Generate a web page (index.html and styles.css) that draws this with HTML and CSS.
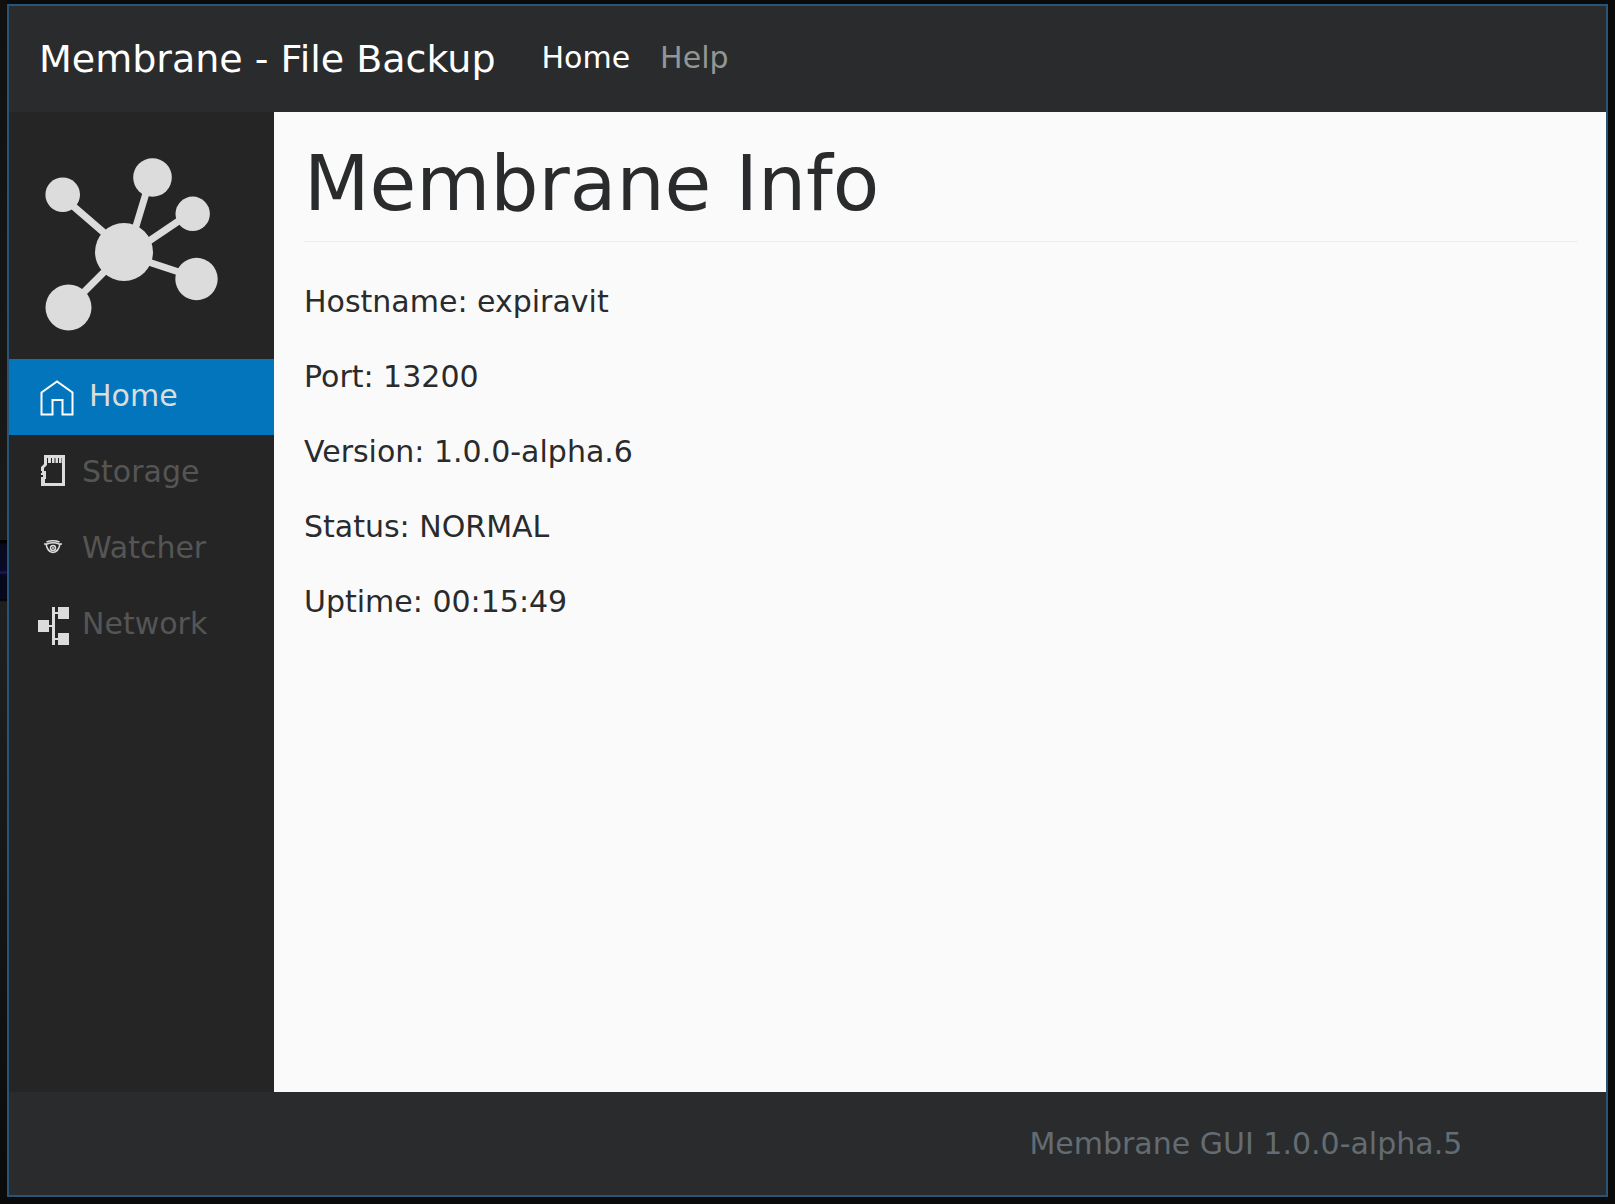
FILE: index.html
```html
<!DOCTYPE html>
<html lang="en">
<head>
<meta charset="utf-8">
<meta name="viewport" content="width=device-width, initial-scale=1">
<title>Membrane - File Backup</title>
<link rel="stylesheet" href="styles.css">
</head>
<body>
<div class="window">
  <header class="navbar">
    <a class="brand" href="#">Membrane - File Backup</a>
    <nav class="nav" aria-label="Main">
      <a class="nav-link active" href="#home">Home</a>
      <a class="nav-link" href="#help">Help</a>
    </nav>
  </header>
  <div class="body">
    <aside class="sidebar">
      <svg class="logo" viewBox="0 0 174 174" aria-hidden="true">
        <path d="M80 93 18 39.500M86 89 106 23M80 101 148 55M80 97 150 120M80 95 25 150" fill="none" stroke="currentColor" stroke-width="7"/>
        <g fill="currentColor">
          <circle cx="80" cy="95" r="29"/>
          <circle cx="18.700" cy="37.700" r="17.300"/>
          <circle cx="108.500" cy="20.500" r="19.300"/>
          <circle cx="148.700" cy="56.800" r="17.200"/>
          <circle cx="152.500" cy="122" r="21.200"/>
          <circle cx="24.500" cy="150.500" r="23"/>
        </g>
      </svg>
      <nav class="menu" aria-label="Sections">
        <a class="menu-item active" href="#home">
          <svg class="icon icon-wide" viewBox="0 0 41 40" aria-hidden="true"><path d="M3.500 35.500V13.500L19 2.500L34.500 13.500V35.500H24.500V21H14.500V35.500Z" fill="none" stroke="#fff" stroke-width="2"/></svg>
          Home</a>
        <a class="menu-item" href="#storage">
          <svg class="icon" viewBox="0 0 34 40" aria-hidden="true"><path fill="currentColor" fill-rule="evenodd" d="M6 0H27V31H3V22H5V20H3V18H4V16H3V12L6 9ZM9 3V10L6 13V16H8V24H7V28H24V3H23.500V8H21V3H20V8H17.500V3H16.500V8H14V3H13V8H10V3Z"/></svg>
          Storage</a>
        <a class="menu-item" href="#watcher">
          <svg class="icon" viewBox="0 0 34 40" aria-hidden="true"><g fill="none" stroke="currentColor" stroke-width="1.500"><path d="M8.500 11Q15 8.500 21.500 11M6 13H9Q15 10.500 21 13H24M8 13Q9.500 21 15 21.500Q20.500 21 22 13"/><circle cx="15" cy="17" r="2.500"/></g><circle cx="15" cy="17" r="1" fill="currentColor"/></svg>
          Watcher</a>
        <a class="menu-item" href="#network">
          <svg class="icon" viewBox="0 0 34 40" aria-hidden="true"><path fill="currentColor" d="M0 13H11V18H14V0H17V5H20V0H31V12H20V7H17V31H20V26H31V38H20V33H17V38H14V20H11V25H0Z"/></svg>
          Network</a>
      </nav>
    </aside>
    <main class="content">
      <h1 class="title">Membrane Info</h1>
      <p class="info">Hostname: expiravit</p>
      <p class="info">Port: 13200</p>
      <p class="info">Version: 1.0.0-alpha.6</p>
      <p class="info">Status: NORMAL</p>
      <p class="info">Uptime: 00:15:49</p>
    </main>
  </div>
  <footer class="footer">Membrane GUI 1.0.0-alpha.5</footer>
</div>
</body>
</html>
```
FILE: styles.css
```css
* {
  box-sizing: border-box;
}

body {
  margin: 0;
  min-height: 100vh;
  display: flex;
  padding: 4px 7px 7px;
  font-family: "DejaVu Sans", sans-serif;
  font-size: 30px;
  line-height: 46px;
  color: #292b2c;
  /* desktop behind the window, with a blue band showing at the left edge */
  background:
    linear-gradient(#101010, #1a1a1a 540px, #000 540px, #000 543px, #08081c 544px, #0b0b2a 571px, #1c1c66 572px, #08081c 575px, #08081c 599px, #000 600px, #202020 602px, #0a0a0a) left / 7px 100% no-repeat,
    #0a0a0a;
}

a {
  text-decoration: none;
}

.window {
  flex: 1;
  display: flex;
  flex-direction: column;
  border: 2px solid #285577;
  background: #fafafa;
}

.navbar {
  display: flex;
  align-items: center;
  gap: 46px;
  padding: 26px 30px;
  background: #292b2c;
}

.brand {
  font-size: 38px;
  line-height: 54px;
  color: #fff;
}

.nav {
  display: flex;
  gap: 30px;
}

.nav-link {
  padding-bottom: 2px;
  color: #949595;
}

.nav-link.active {
  color: #fff;
}

.body {
  flex: 1;
  display: flex;
}

.sidebar {
  flex: none;
  width: 265px;
  background: #252525;
  color: #dcdcdc;
}

.logo {
  display: block;
  width: 174px;
  height: 174px;
  margin: 45px 35px 28px;
}

.menu-item {
  display: flex;
  align-items: flex-end;
  gap: 10px;
  padding: 14px 29px 16px;
  color: #555;
}

.menu-item.active {
  background: #0275bd;
  color: #dcdcdc;
}

.icon {
  flex: none;
  width: 34px;
  height: 40px;
  color: #dcdcdc;
}

.icon-wide {
  width: 41px;
}

.content {
  flex: 1;
  padding: 30px 28px 30px 30px;
}

.title {
  margin: 0 0 37px;
  padding-bottom: 15px;
  border-bottom: 1px solid #eceded;
  font-size: 76px;
  font-weight: 400;
  line-height: 84px;
}

.info {
  margin: 0 0 29px;
}

.footer {
  padding: 29px 9% 28px;
  background: #292b2c;
  color: #636c72;
  text-align: right;
}
```
